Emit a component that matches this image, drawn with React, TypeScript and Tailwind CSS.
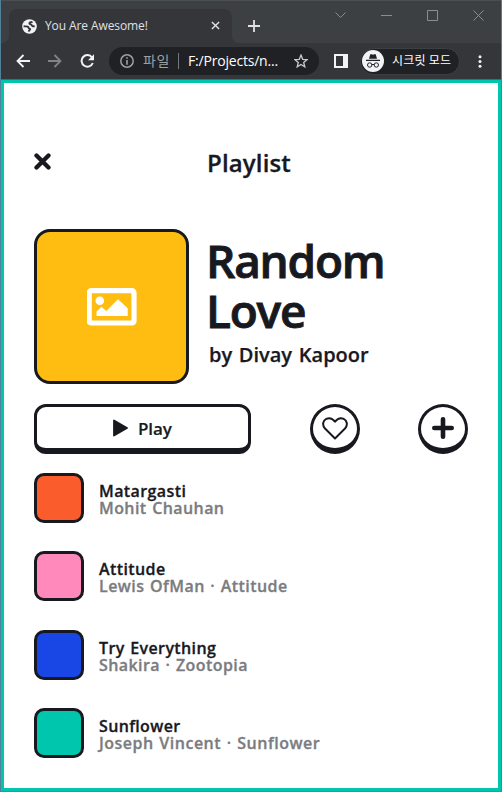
import React from "react";

const ui = "font-['Open_Sans','Noto_Sans_CJK_KR',sans-serif]";

const tracks = [
  { title: "Matargasti", by: "Mohit Chauhan", color: "bg-[#fa5c2b]", gap: "mb-[28px]", tt: "tracking-[0.4px]", bt: "tracking-[0.42px]" },
  { title: "Attitude", by: "Lewis OfMan · Attitude", color: "bg-[#ff89bb]", gap: "mb-[29px]", tt: "tracking-[0.4px]", bt: "tracking-[0.44px]" },
  { title: "Try Everything", by: "Shakira · Zootopia", color: "bg-[#1947e5]", gap: "mb-[28px]", tt: "tracking-[0.39px]", bt: "tracking-[0.42px]" },
  { title: "Sunflower", by: "Joseph Vincent · Sunflower", color: "bg-[#00c6ae]", gap: "", tt: "tracking-[0.35px]", bt: "tracking-[0.5px]" },
];

function TabStrip() {
  return (
    <div className="flex h-[43px] border-t border-[#4b4f52] bg-[#3c4043]">
      <div className="flex w-[8px] shrink-0 items-end bg-[#35363a]">
        <div className="h-[42px] w-[8px] rounded-br-[7px] bg-[#3c4043]" />
      </div>
      <div className="mt-[8px] flex h-[34px] w-[223px] shrink-0 items-center rounded-t-[8px] bg-[#35363a] pl-[13px]">
        <svg className="shrink-0" width="15" height="15" viewBox="0 0 15 15">
          <circle cx="7.500" cy="7.500" r="7.300" fill="#f1f3f4" />
          <path d="M10.500 2.600C9.500 3.600 7.600 2.900 7.400 4.200c-.1 1.400 2.400 1 2.500 2.300.1.900 1.200.9 2.800.7M1.600 7.300c1.400.2 3.400-.1 4.300.4.900.6.400 1.600 1.500 2 .8.300 1.200.6.300 1.300-.8.600-.9 1-1 1.700" fill="none" stroke="#35363a" strokeWidth="1.900" />
        </svg>
        <span className="ml-[8px] w-[160px] whitespace-nowrap text-[12px] leading-[16px] tracking-[-0.1px] text-[#dfe1e5]">You Are Awesome!</span>
        <svg className="mt-[-1px] ml-[6px] shrink-0" width="9" height="9" viewBox="0 0 10 10" stroke="#dfe1e5" strokeWidth="1.600"><path d="M1 1l8 8M9 1L1 9" /></svg>
      </div>
      <div className="flex grow bg-[#35363a]">
        <div className="flex grow rounded-bl-[7px] bg-[#3c4043]">
          <svg className="mt-[19px] ml-[16px]" width="12" height="12" viewBox="0 0 12 12" stroke="#dfe1e5" strokeWidth="1.800"><path d="M6 0v12M0 6h12" /></svg>
          <svg className="mt-[10px] ml-[75px]" width="11" height="9" viewBox="0 0 11 9" fill="none" stroke="#8b8e90"><path d="M.5 1.500l5 5 5-5" /></svg>
          <svg className="mt-[14px] ml-[35px]" width="11" height="1" viewBox="0 0 11 1"><path d="M0 0h11v1H0z" fill="#8b8e90" /></svg>
          <svg className="mt-[9px] ml-[35px]" width="11" height="11" viewBox="0 0 11 11" fill="none" stroke="#8b8e90"><path d="M.5.5h10v10H.5z" /></svg>
          <svg className="mt-[9px] ml-[35px]" width="11" height="11" viewBox="0 0 11 11" stroke="#8b8e90"><path d="M.5.5l10 10M10.500.5l-10 10" /></svg>
        </div>
      </div>
    </div>
  );
}

function Toolbar() {
  return (
    <div className="flex h-[37px] items-center border-b border-[#606164] bg-[#35363a] pl-[15px]">
      <svg className="shrink-0" width="14" height="14" viewBox="0 0 14 14" fill="none" stroke="#f1f3f4" strokeWidth="1.800"><path d="M14 7H1.500M7.500 1L1.500 7l6 6" /></svg>
      <svg className="ml-[18px] shrink-0" width="14" height="14" viewBox="0 0 14 14" fill="none" stroke="#828386" strokeWidth="1.800"><path d="M0 7h12.500M6.500 1l6 6-6 6" /></svg>
      <svg className="ml-[18px] shrink-0" width="15" height="14" viewBox="0 0 15 14" fill="none" stroke="#f1f3f4" strokeWidth="2"><path d="M12 3.300A5.800 5.800 0 1 0 12.800 9" /><path d="M14 .2v6H8z" fill="#f1f3f4" stroke="none" /></svg>
      <div className="ml-[14px] flex h-[28px] w-[210px] shrink-0 items-center rounded-full bg-[#202124] pl-[11px]">
        <svg className="shrink-0" width="14" height="14" viewBox="0 0 14 14"><circle cx="7" cy="7" r="6.200" fill="none" stroke="#9aa0a6" strokeWidth="1.500" /><path d="M6.200 3.200h1.600v1.600H6.200zM6.200 6h1.600v4.800H6.200z" fill="#9aa0a6" /></svg>
        <span className="ml-[9px] w-[28px] whitespace-nowrap text-[14px] leading-[20px] tracking-[0.6px] text-[#9aa0a6]">파일</span>
        <span className="ml-[7px] h-[16px] w-px bg-[#74777b]" />
        <span className="ml-[9px] w-[90px] whitespace-nowrap text-[14px] leading-[20px] tracking-[-0.2px] text-white">F:/Projects/n...</span>
        <svg className="ml-[16px] shrink-0" width="14" height="14" viewBox="0 0 14 14" fill="none" stroke="#c7cace" strokeWidth="1.300"><path d="M7 1.100l1.700 4.200 4.500.3-3.500 2.900 1.100 4.300L7 10.400l-3.800 2.400 1.100-4.300L.8 5.600l4.500-.3z" /></svg>
      </div>
      <svg className="ml-[15px] shrink-0" width="14" height="14" viewBox="0 0 14 14"><path fillRule="evenodd" d="M0 0h14v14H0zM2 2v10h7V2z" fill="#f1f3f4" /></svg>
      <div className="ml-[12px] flex h-[27px] w-[100px] shrink-0 items-center rounded-full border border-[#3c4043] bg-[#202124] pl-[1px]">
        <svg className="shrink-0" width="22" height="22" viewBox="0 0 22 22">
          <circle cx="11" cy="11" r="11" fill="#f1f3f4" />
          <path d="M8.300 4.300h1.500l1.200.5 1.200-.5h1.500L15 8.800H7zM4 9.800h14v1.200H4z" fill="#202124" />
          <path d="M9.900 14.700q1.100-.7 2.200 0" fill="none" stroke="#202124" /><circle cx="7.700" cy="15" r="2.200" fill="none" stroke="#202124" /><circle cx="14.300" cy="15" r="2.200" fill="none" stroke="#202124" />
        </svg>
        <span className="ml-[8px] whitespace-nowrap text-[12px] leading-[18px] tracking-[0.15px] text-white">시크릿 모드</span>
      </div>
      <svg className="ml-[18px] shrink-0" width="4" height="13" viewBox="0 0 4 13" fill="#f1f3f4"><circle cx="2" cy="1.700" r="1.500" /><circle cx="2" cy="6.500" r="1.500" /><circle cx="2" cy="11.300" r="1.500" /></svg>
    </div>
  );
}

export default function App() {
  return (
    <div className={`h-[792px] w-[502px] overflow-hidden border-x border-b border-x-[#527f99] border-b-[#468da4] text-[#18191f] ${ui}`}>
      <TabStrip />
      <Toolbar />
      <main className="h-[711px] border-[3px] border-[#00c6ae] bg-white px-[30px]">
        <header className="mt-[64px] flex h-[32px] items-center">
          <svg className="mt-[-3px] shrink-0" width="17" height="17" viewBox="0 0 17 17" stroke="#18191f" strokeWidth="4.300" strokeLinecap="round"><path d="M2.500 2.500l12 12M14.500 2.500l-12 12" /></svg>
          <h1 className="ml-[156px] whitespace-nowrap text-[24px] leading-[32px] font-semibold tracking-[0.15px] [-webkit-text-stroke:0.3px_#18191f]">Playlist</h1>
        </header>
        <section className="mt-[50px] flex h-[155px]">
          <div className="flex h-[155px] w-[155px] shrink-0 items-center justify-center rounded-[16px] border-[3px] border-[#18191f] bg-[#ffbd12]">
            <svg width="50" height="38" viewBox="0 0 50 38" fill="none"><rect x="2.200" y="2.700" width="44.800" height="32.300" rx="2" stroke="white" strokeWidth="5.200" /><circle cx="12.800" cy="12.800" r="4.300" fill="white" /><path d="M9.500 28v-4.500l5-4.800 4.700 4.300L31 11.200l9.700 9V28z" fill="white" /></svg>
          </div>
          <div className="ml-[17px]">
            <h2 className="mt-[6px] text-[46px] leading-[50px] font-semibold tracking-[-1.25px] [-webkit-text-stroke:0.9px_#18191f]">Random<br />Love</h2>
            <p className="mt-[6px] ml-[3px] whitespace-nowrap text-[20px] leading-[28px] font-semibold [-webkit-text-stroke:0.25px_#18191f] [word-spacing:1.5px]">by Divay Kapoor</p>
          </div>
        </section>
        <section className="mt-[20px] flex h-[50px]">
          <button className="flex h-[50px] w-[217px] shrink-0 items-center rounded-[12px] border-[3px] border-b-[6px] border-[#18191f] bg-white pl-[76px]">
            <svg width="15" height="18" viewBox="0 0 15 18"><path d="M1 1.500v15l13-7.500z" fill="#18191f" stroke="#18191f" strokeWidth="1.800" strokeLinejoin="round" /></svg>
            <span className="mt-[2px] ml-[10px] text-[17px] leading-[22px] font-semibold tracking-[-0.1px] [-webkit-text-stroke:0.2px_#18191f]">Play</span>
          </button>
          <button className="ml-[59px] flex h-[50px] w-[50px] shrink-0 items-center justify-center rounded-full border-[3px] border-b-[6px] border-[#18191f] bg-white">
            <svg className="mt-[1px]" width="26" height="23" viewBox="0 0 26 23" fill="none" stroke="#18191f" strokeWidth="2"><path d="M13 21.500L3 11.500C-.2 8 1 3.500 4.300 1.900 7.300.5 10.500 1.500 13 4.700 15.500 1.500 18.700.5 21.700 1.900 25 3.500 26.200 8 23 11.500z" strokeLinejoin="round" /></svg>
          </button>
          <button className="ml-[58px] flex h-[50px] w-[50px] shrink-0 items-center justify-center rounded-full border-[3px] border-b-[6px] border-[#18191f] bg-white">
            <svg className="mt-[1px]" width="22" height="22" viewBox="0 0 22 22" stroke="#18191f" strokeWidth="4.600" strokeLinecap="round"><path d="M11 2.300v17.400M2.300 11h17.400" /></svg>
          </button>
        </section>
        <ul className="mt-[19px]">
          {tracks.map((t) => (
            <li key={t.title} className={`flex h-[50px] ${t.gap}`}>
              <div className={`h-[50px] w-[50px] shrink-0 rounded-[10px] border-[3px] border-[#18191f] ${t.color}`} />
              <div className="mt-[10px] ml-[15px] text-[16px] leading-[17px] font-semibold whitespace-nowrap [-webkit-text-stroke-width:0.3px] [word-spacing:1px]">
                <p className={t.tt}>{t.title}</p>
                <p className={`text-[#7b7c80] ${t.bt}`}>{t.by}</p>
              </div>
            </li>
          ))}
        </ul>
      </main>
    </div>
  );
}
